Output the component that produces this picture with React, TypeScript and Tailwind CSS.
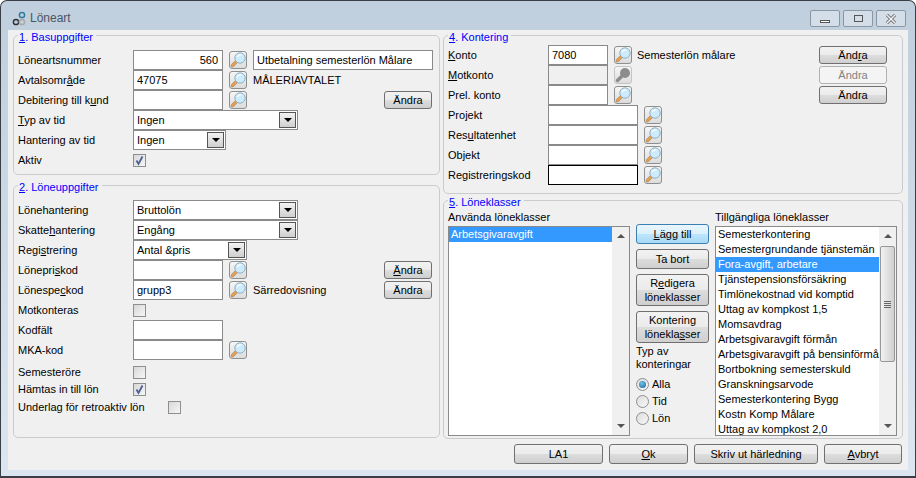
import type { ReactNode } from "react";

const font = { fontFamily: "'Liberation Sans', Arial, sans-serif" };

function SearchIcon({ disabled = false }: { disabled?: boolean }) {
  if (disabled) {
    return (
      <svg width="16" height="16" viewBox="0 0 16 16">
        <path d="M6.5 9.5 L2.5 13.5" stroke="#8c8c8c" strokeWidth="3.4" strokeLinecap="round" />
        <circle cx="10" cy="6" r="5" fill="#8c8c8c" />
      </svg>
    );
  }
  return (
    <svg width="16" height="16" viewBox="0 0 16 16">
      <path d="M6.5 9.5 L2.4 13.6" stroke="#a8875f" strokeWidth="3.2" strokeLinecap="round" />
      <path d="M6 10 L2.4 13.6" stroke="#f0a04a" strokeWidth="2" strokeLinecap="round" />
      <circle cx="10" cy="6" r="5.2" fill="#cdebfa" stroke="#8fb0c2" />
      <path d="M7 5 Q8.4 2.6 11.4 2.9" stroke="#ffffff" strokeWidth="1.4" fill="none" />
    </svg>
  );
}

function SearchBtn({ disabled = false }: { disabled?: boolean }) {
  return (
    <div className={`ml-[6px] flex h-[18px] w-[18px] shrink-0 items-center justify-center rounded-[3px] border bg-gradient-to-b from-[#f6f6f6] to-[#dcdcdc] ${disabled ? "border-[#c4c4c4]" : "border-[#8e8f8f]"}`}>
      <SearchIcon disabled={disabled} />
    </div>
  );
}

function Field({ value = "", width = "w-[90px]", right = false, disabled = false, dark = false }: { value?: string; width?: string; right?: boolean; disabled?: boolean; dark?: boolean }) {
  return (
    <div className={`flex h-5 shrink-0 items-center border px-[3px] ${width} ${dark ? "border-black" : "border-[#8a8a8a]"} ${disabled ? "bg-[#f0f0f0]" : "bg-white"} ${right ? "justify-end pr-[4px]" : ""}`}>
      {value}
    </div>
  );
}

function Combo({ value, width }: { value: string; width: string }) {
  return (
    <div className={`flex h-5 shrink-0 items-center justify-between border border-[#8a8a8a] bg-white pl-[3px] pr-px ${width}`}>
      <span>{value}</span>
      <div className="flex h-4 w-[17px] items-center justify-center border border-[#555] bg-gradient-to-b from-[#f2f2f2] to-[#cfcfcf]">
        <div className="h-0 w-0 border-x-[4px] border-t-[4px] border-x-transparent border-t-black" />
      </div>
    </div>
  );
}

function Check({ checked = false }: { checked?: boolean }) {
  return (
    <div className="flex h-[13px] w-[13px] shrink-0 items-center justify-center border border-[#8e8f8f] bg-gradient-to-br from-[#d8d8d8] to-[#f6f6f6]">
      {checked && (
        <svg width="11" height="11" viewBox="0 0 11 11">
          <path d="M2.5 5.5 L4.5 9 L8.5 1.5" stroke="#4a5f97" strokeWidth="1.8" fill="none" />
        </svg>
      )}
    </div>
  );
}

function Row({ label, labelWidth = "w-[115px]", children }: { label: ReactNode; labelWidth?: string; children?: ReactNode }) {
  return (
    <div className="flex h-5 items-center">
      <div className={`shrink-0 ${labelWidth}`}>{label}</div>
      {children}
    </div>
  );
}

function Btn({ children, className = "", disabled = false, focused = false }: { children: ReactNode; className?: string; disabled?: boolean; focused?: boolean }) {
  const look = focused
    ? "border-[#3c7fb1] bg-[linear-gradient(#eaf6fd_0%,#d9f0fc_50%,#bee6fd_50%,#a7d9f5_100%)]"
    : disabled
      ? "border-[#adb2b5] bg-[#f4f4f4] text-[#838383]"
      : "border-[#707070] bg-[linear-gradient(#f2f2f2_0%,#ebebeb_50%,#dddddd_50%,#cfcfcf_100%)]";
  return (
    <div className={`flex shrink-0 items-center justify-center rounded-[3px] border text-center leading-[14px] ${look} ${className}`}>
      <span>{children}</span>
    </div>
  );
}

function Group({ title, className = "", children }: { title: ReactNode; className?: string; children: ReactNode }) {
  return (
    <div className={`relative rounded-[5px] border border-[#c8cccf] ${className}`}>
      <div className="absolute left-[4px] top-[-6px] bg-[#f0f0f0] px-px pr-[3px] leading-[14px] text-[#0000ff]">{title}</div>
      {children}
    </div>
  );
}

function ScrollBar({ thumb = false }: { thumb?: boolean }) {
  return (
    <div className="flex w-[17px] shrink-0 flex-col items-center bg-[#f0f0f0]">
      <div className="mt-[7px] h-0 w-0 border-x-[4px] border-b-[4px] border-x-transparent border-b-[#555]" />
      {thumb && (
        <div className="mt-[8px] flex h-[116px] w-[15px] flex-col items-center justify-center gap-px rounded-[2px] border border-[#979797] bg-gradient-to-r from-[#f2f2f2] to-[#d0d0d0]">
          <div className="h-px w-[7px] bg-[#666]" />
          <div className="h-px w-[7px] bg-[#666]" />
          <div className="h-px w-[7px] bg-[#666]" />
          <div className="h-px w-[7px] bg-[#666]" />
        </div>
      )}
      <div className="mt-auto mb-[7px] h-0 w-0 border-x-[4px] border-t-[4px] border-x-transparent border-t-[#555]" />
    </div>
  );
}

function Radio({ label, checked = false }: { label: string; checked?: boolean }) {
  return (
    <div className="flex h-[17px] items-center gap-[3px]">
      <div className="flex h-[13px] w-[13px] items-center justify-center rounded-full border border-[#8e8f8f] bg-gradient-to-br from-[#dcdcdc] to-[#f8f8f8]">
        {checked && <div className="h-[7px] w-[7px] rounded-full bg-[radial-gradient(circle_at_40%_35%,#6fc3e8,#1c5f96)]" />}
      </div>
      <span>{label}</span>
    </div>
  );
}

const available = [
  "Semesterkontering",
  "Semestergrundande tjänstemän",
  "Fora-avgift, arbetare",
  "Tjänstepensionsförsäkring",
  "Timlönekostnad vid komptid",
  "Uttag av kompkost 1,5",
  "Momsavdrag",
  "Arbetsgivaravgift förmån",
  "Arbetsgivaravgift på bensinförmån",
  "Bortbokning semesterskuld",
  "Granskningsarvode",
  "Semesterkontering Bygg",
  "Kostn Komp Målare",
  "Uttag av kompkost 2,0",
];

export default function App() {
  return (
    <div style={font} className="flex h-[478px] w-[916px] flex-col overflow-hidden rounded-t-[7px] border border-b-2 border-[#3a3f45] bg-[linear-gradient(#c0cfdd,#dbe6f0)] text-[11px] leading-[15px] text-black">
      {/* title bar */}
      <div className="flex h-[29px] shrink-0 items-center pl-[10px] pr-[9px] pt-[6px]">
        <svg width="18" height="18" viewBox="0 0 18 18" fill="none" strokeWidth="1.5">
          <circle cx="11" cy="5" r="2.6" stroke="#2f7d9c" />
          <circle cx="5" cy="12" r="2.6" stroke="#333" />
          <circle cx="11" cy="12" r="2.6" stroke="#aaa" />
        </svg>
        <span className="ml-[1px] text-[12px] text-[#4c5561]">Löneart</span>
        <div className="ml-auto flex gap-[3px]">
          <div className="flex h-[17px] w-[30px] items-center justify-center rounded-[2px] border border-[#8a97a3] bg-[#d3dee8]">
            <div className="mt-[5px] h-[3px] w-[10px] border border-[#555] bg-white" />
          </div>
          <div className="flex h-[17px] w-[30px] items-center justify-center rounded-[2px] border border-[#8a97a3] bg-[#d3dee8]">
            <div className="h-[7px] w-[9px] border border-[#555]" />
          </div>
          <div className="flex h-[17px] w-[30px] items-center justify-center rounded-[2px] border border-[#8a97a3] bg-[#d3dee8]">
            <svg width="12" height="10" viewBox="0 0 12 10">
              <path d="M2 1 L10 9 M10 1 L2 9" stroke="#555" strokeWidth="3" />
              <path d="M2 1 L10 9 M10 1 L2 9" stroke="#f2f2f2" strokeWidth="1.6" />
            </svg>
          </div>
        </div>
      </div>

      {/* client area */}
      <div className="mx-[7px] flex h-[440px] shrink-0 flex-col bg-[#f0f0f0] px-[5px] pt-[5px]">
        <div className="flex gap-[3px]">
          <div className="flex w-[427px] shrink-0 flex-col gap-[10px]">
            <Group title={<><u>1</u>. Basuppgifter</>} className="h-[140px] pl-[4px] pt-[14px]">
              <Row label="Löneartsnummer">
                <Field value="560" right />
                <SearchBtn />
                <Field value="Utbetalning semesterlön Målare" width="ml-[6px] w-[180px]" />
              </Row>
              <Row label={<>Avtalsomr<u>å</u>de</>}>
                <Field value="47075" />
                <SearchBtn />
                <span className="ml-[6px]">MÅLERIAVTALET</span>
              </Row>
              <Row label={<>Debitering till k<u>u</u>nd</>}>
                <Field />
                <SearchBtn />
                <Btn className="ml-auto mr-[7px] h-[18px] w-[48px]">Ändra</Btn>
              </Row>
              <Row label={<><u>T</u>yp av tid</>}>
                <Combo value="Ingen" width="w-[165px]" />
              </Row>
              <Row label="Hantering av tid">
                <Combo value="Ingen" width="w-[93px]" />
              </Row>
              <Row label="Aktiv">
                <Check checked />
              </Row>
            </Group>

            <Group title={<><u>2</u>. Löneuppgifter</>} className="h-[253px] pl-[4px] pt-[14px]">
              <Row label={<>Lönehanterin<u>g</u></>}>
                <Combo value="Bruttolön" width="w-[165px]" />
              </Row>
              <Row label={<>Skatte<u>h</u>antering</>}>
                <Combo value="Engång" width="w-[165px]" />
              </Row>
              <Row label={<>Regi<u>s</u>trering</>}>
                <Combo value="Antal &pris" width="w-[114px]" />
              </Row>
              <Row label={<>Lönepri<u>s</u>kod</>}>
                <Field />
                <SearchBtn />
                <Btn className="ml-auto mr-[7px] h-[18px] w-[48px]"><><u>Ä</u>ndra</></Btn>
              </Row>
              <Row label={<>Lönespe<u>c</u>kod</>}>
                <Field value="grupp3" />
                <SearchBtn />
                <span className="ml-[6px]">Särredovisning</span>
                <Btn className="ml-auto mr-[7px] h-[18px] w-[48px]">Ändra</Btn>
              </Row>
              <Row label="Motkonteras">
                <Check />
              </Row>
              <Row label="Kodfält">
                <Field />
              </Row>
              <Row label="MKA-kod">
                <Field />
                <SearchBtn />
              </Row>
              <div className="mt-[4px] flex h-[17px] items-center">
                <div className="w-[115px]">Semesteröre</div>
                <Check />
              </div>
              <div className="flex h-[17px] items-center">
                <div className="w-[115px]">Hämtas in till lön</div>
                <Check checked />
              </div>
              <div className="flex h-[18px] items-center">
                <div className="w-[150px]">Underlag för retroaktiv lön</div>
                <Check />
              </div>
            </Group>
          </div>

          <div className="flex w-[460px] shrink-0 flex-col gap-[6px]">
            <Group title={<><u>4</u>. Kontering</>} className="h-[159px] pl-[4px] pt-[9px]">
              <Row label={<><u>K</u>onto</>} labelWidth="w-[100px]">
                <Field value="7080" width="w-[60px]" />
                <SearchBtn />
                <span className="ml-[5px]">Semesterlön målare</span>
                <Btn className="ml-auto mr-[15px] h-[18px] w-[68px]"><>Änd<u>r</u>a</></Btn>
              </Row>
              <Row label={<><u>M</u>otkonto</>} labelWidth="w-[100px]">
                <Field width="w-[60px]" disabled />
                <SearchBtn disabled />
                <Btn disabled className="ml-auto mr-[15px] h-[18px] w-[68px]">Ändra</Btn>
              </Row>
              <Row label="Prel. konto" labelWidth="w-[100px]">
                <Field width="w-[60px]" />
                <SearchBtn />
                <Btn className="ml-auto mr-[15px] h-[18px] w-[68px]">Ändra</Btn>
              </Row>
              <Row label={<>Pro<u>j</u>ekt</>} labelWidth="w-[100px]">
                <Field />
                <SearchBtn />
              </Row>
              <Row label={<>Res<u>u</u>ltatenhet</>} labelWidth="w-[100px]">
                <Field />
                <SearchBtn />
              </Row>
              <Row label="Objekt" labelWidth="w-[100px]">
                <Field />
                <SearchBtn />
              </Row>
              <Row label="Registreringskod" labelWidth="w-[100px]">
                <Field dark />
                <SearchBtn />
              </Row>
            </Group>

            <Group title={<><u>5</u>. Löneklasser</>} className="h-[239px] pl-[4px] pt-[9px]">
              <div className="flex">
                <div className="flex w-[182px] shrink-0 flex-col">
                  <div className="h-[16px]">Använda löneklasser</div>
                  <div className="flex h-[210px] border border-[#8a8a8a] bg-white">
                    <div className="flex-1 overflow-hidden">
                      <div className="h-[15px] bg-[#3399ff] pl-[2px] text-white">Arbetsgivaravgift</div>
                    </div>
                    <ScrollBar />
                  </div>
                </div>

                <div className="ml-[6px] mt-[14px] flex w-[73px] shrink-0 flex-col">
                  <Btn focused className="h-5"><><u>L</u>ägg till</></Btn>
                  <Btn className="mt-[5px] h-5">Ta bort</Btn>
                  <Btn className="mt-[5px] h-8"><>R<u>e</u>digera<br />löneklasser</></Btn>
                  <Btn className="mt-[5px] h-8"><>Kontering<br />lönekla<u>s</u>ser</></Btn>
                  <div className="mt-[2px] leading-[13px]">Typ av<br />konteringar</div>
                  <div className="mt-[5px] flex flex-col">
                    <Radio label="Alla" checked />
                    <Radio label="Tid" />
                    <Radio label="Lön" />
                  </div>
                </div>

                <div className="ml-[6px] flex w-[182px] shrink-0 flex-col">
                  <div className="h-[16px]">Tillgängliga löneklasser</div>
                  <div className="flex h-[210px] border border-[#8a8a8a] bg-white">
                    <div className="min-w-0 flex-1 overflow-hidden">
                      {available.map((name, i) => (
                        <div key={name} className={`h-[15px] whitespace-nowrap pl-[2px] ${i === 2 ? "bg-[#3399ff] text-white" : ""}`}>
                          {name}
                        </div>
                      ))}
                    </div>
                    <ScrollBar thumb />
                  </div>
                </div>
              </div>
            </Group>
          </div>
        </div>

        {/* bottom buttons */}
        <div className="mt-[5px] flex justify-end gap-[6px] pr-[1px]">
          <Btn className="h-5 w-[89px]">LA1</Btn>
          <Btn className="h-5 w-[79px]"><><u>O</u>k</></Btn>
          <Btn className="h-5 w-[124px]">Skriv ut härledning</Btn>
          <Btn className="h-5 w-[78px]"><><u>A</u>vbryt</></Btn>
        </div>
      </div>
    </div>
  );
}
